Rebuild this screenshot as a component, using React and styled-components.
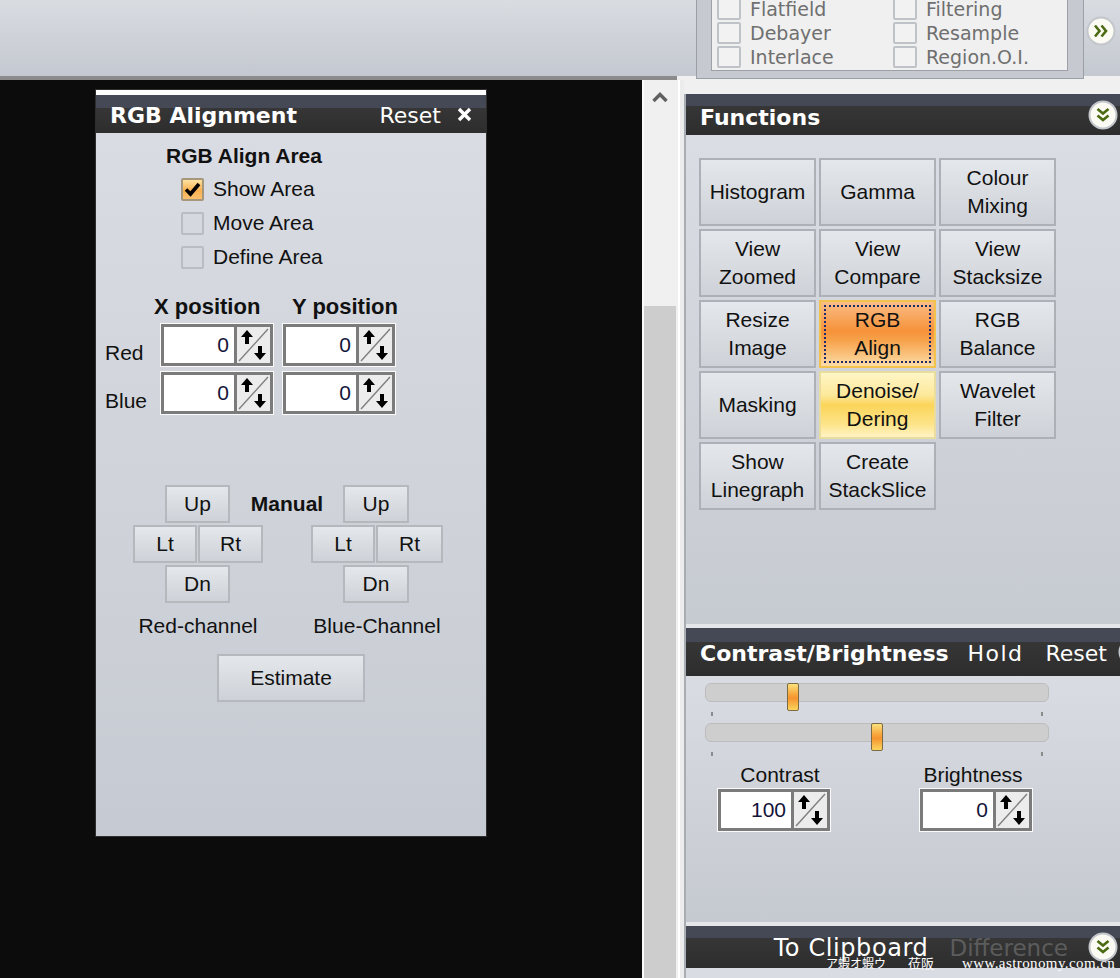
import styled, { createGlobalStyle } from "styled-components";

const GlobalStyle = createGlobalStyle`
  html, body {
    margin: 0;
    padding: 0;
    background: #0c0c0c;
  }
  body {
    font-family: "Liberation Sans", Arial, sans-serif;
  }
  #root {
    width: 1120px;
    height: 978px;
    overflow: hidden;
  }
`;

const options = [
  "Flatfield",
  "Filtering",
  "Debayer",
  "Resample",
  "Interlace",
  "Region.O.I.",
];

const functions = [
  { label: "Histogram" },
  { label: "Gamma" },
  { label: "Colour\nMixing" },
  { label: "View\nZoomed" },
  { label: "View\nCompare" },
  { label: "View\nStacksize" },
  { label: "Resize\nImage" },
  { label: "RGB\nAlign", state: "active" },
  { label: "RGB\nBalance" },
  { label: "Masking" },
  { label: "Denoise/\nDering", state: "hover" },
  { label: "Wavelet\nFilter" },
  { label: "Show\nLinegraph" },
  { label: "Create\nStackSlice" },
];

const SpinIcon = () => (
  <svg width="31" height="34" viewBox="0 0 31 34">
    <line x1="1" y1="33" x2="30" y2="1" stroke="#808080" strokeWidth="1.4" />
    <path d="M9 2 L3 9 H7 V16 H11 V9 H15 Z" fill="#000" />
    <path d="M22 32 L16 25 H20 V18 H24 V25 H28 Z" fill="#000" />
  </svg>
);

const Chevron = ({ dir = "down" }) => (
  <svg
    width="30"
    height="30"
    viewBox="0 0 30 30"
    style={{ transform: dir === "right" ? "rotate(-90deg)" : "none" }}
  >
    <circle cx="15" cy="15" r="13.5" fill="#fbfbf4" stroke="#c3c6cb" strokeWidth="2" />
    <path d="M9.5 9 L15 13.5 L20.5 9" stroke="#4b6a12" strokeWidth="2.6" fill="none" />
    <path d="M9.5 15.5 L15 20 L20.5 15.5" stroke="#4b6a12" strokeWidth="2.6" fill="none" />
  </svg>
);

const CloseIcon = () => (
  <svg width="15" height="15" viewBox="0 0 15 15">
    <path d="M2 2 L13 13 M13 2 L2 13" stroke="#fff" strokeWidth="3.4" />
  </svg>
);

const SpinBox = ({ value }) => (
  <SpinFrame>
    <SpinValue>{value}</SpinValue>
    <SpinButton>
      <SpinIcon />
    </SpinButton>
  </SpinFrame>
);

const CheckItem = ({ checked, children }) => (
  <CheckRow>
    <CheckBox $checked={checked}>
      {checked && (
        <svg width="19" height="19" viewBox="0 0 19 19">
          <path d="M3 9.5 L7.5 14 L16 4" stroke="#000" strokeWidth="3.6" fill="none" />
        </svg>
      )}
    </CheckBox>
    <CheckLabel>{children}</CheckLabel>
  </CheckRow>
);

const DPad = ({ cols }) => (
  <PadGrid $cols={cols}>
    <PadButton $area="up">Up</PadButton>
    <PadButton $area="lt">Lt</PadButton>
    <PadButton $area="rt">Rt</PadButton>
    <PadButton $area="dn">Dn</PadButton>
  </PadGrid>
);

const Slider = ({ thumb }) => (
  <SliderRow>
    <Track />
    <Thumb style={{ left: thumb }} />
    <Ticks>
      <Tick />
      <Tick />
    </Ticks>
  </SliderRow>
);

const App = () => (
  <Screen>
    <GlobalStyle />
    <TopBar>
      <ToolbarLeft />
      <ToolbarRight>
        <OptionsBox>
          <OptionsInner>
            {options.map((o) => (
              <OptionItem key={o}>
                <OptionCheck />
                <OptionLabel>{o}</OptionLabel>
              </OptionItem>
            ))}
          </OptionsInner>
        </OptionsBox>
        <TopChevron>
          <Chevron dir="right" />
        </TopChevron>
      </ToolbarRight>
    </TopBar>

    <Main>
      <Canvas>
        <AlignPanel>
          <PanelHeader $stripe={13}>
            <HeaderTitle>RGB Alignment</HeaderTitle>
            <HeaderAction>Reset</HeaderAction>
            <CloseIcon />
          </PanelHeader>
          <AlignBody>
            <AreaTitle>RGB Align Area</AreaTitle>
            <CheckList>
              <CheckItem checked>Show Area</CheckItem>
              <CheckItem>Move Area</CheckItem>
              <CheckItem>Define Area</CheckItem>
            </CheckList>

            <PosGrid>
              <span />
              <PosHeader $shift={-7}>X position</PosHeader>
              <PosHeader $shift={9}>Y position</PosHeader>
              <RowLabel>Red</RowLabel>
              <SpinBox value="0" />
              <SpinBox value="0" />
              <RowLabel>Blue</RowLabel>
              <SpinBox value="0" />
              <SpinBox value="0" />
            </PosGrid>

            <ManualArea>
              <DPad cols="32px 32px 33px 33px" />
              <ManualLabel>Manual</ManualLabel>
              <DPad cols="32px 32px 34px 34px" />
              <ChannelLabel>Red-channel</ChannelLabel>
              <span />
              <ChannelLabel>Blue-Channel</ChannelLabel>
            </ManualArea>

            <EstimateButton>Estimate</EstimateButton>
          </AlignBody>
        </AlignPanel>
      </Canvas>

      <ScrollBar>
        <ScrollArrow>
          <svg width="16" height="12" viewBox="0 0 16 12">
            <path d="M1.5 10 L8 3.5 L14.5 10" stroke="#5f5f5f" strokeWidth="3.4" fill="none" />
          </svg>
        </ScrollArrow>
        <ScrollThumb />
      </ScrollBar>
      <Splitter />

      <DockColumn>
        <DockStack>
          <PanelHeader $stripe={12} $height={41} $textDrop={3}>
            <HeaderTitle>Functions</HeaderTitle>
            <HeaderSpacer />
            <Chevron />
          </PanelHeader>
          <FunctionsBody>
            <FunctionGrid>
              {functions.map((f) => (
                <FunctionButton key={f.label} $state={f.state}>
                  {f.label}
                </FunctionButton>
              ))}
            </FunctionGrid>
          </FunctionsBody>

          <PanelHeader $stripe={14} $height={48} $textDrop={1}>
            <HeaderTitle>Contrast/Brightness</HeaderTitle>
            <HeaderAction $gap={22} $spacing={1.5}>Hold</HeaderAction>
            <HeaderAction $gap={11}>Reset</HeaderAction>
            <ClippedChevron>
              <Chevron />
            </ClippedChevron>
          </PanelHeader>
          <ContrastBody>
            <Slider thumb="82px" />
            <Slider thumb="166px" />
            <ValueRow>
              <ValueGroup $shift={6}>
                <ValueLabel>Contrast</ValueLabel>
                <SpinBox value="100" />
              </ValueGroup>
              <ValueGroup $shift={-3}>
                <ValueLabel>Brightness</ValueLabel>
                <SpinBox value="0" />
              </ValueGroup>
            </ValueRow>
          </ContrastBody>

          <PanelHeader $stripe={12} $height={42}>
            <HeaderSpacer />
            <FooterAction $spacing={0.6}>To Clipboard</FooterAction>
            <FooterAction $muted>Difference</FooterAction>
            <Chevron />
            <Watermark>
              <WatermarkSmall>ア蝦オ蝦ウ</WatermarkSmall>
              <WatermarkCjk>莅阪</WatermarkCjk>
              <WatermarkUrl>www.astronomy.com.cn</WatermarkUrl>
            </Watermark>
          </PanelHeader>
          <DockFooter />
        </DockStack>
      </DockColumn>
    </Main>
  </Screen>
);

const Screen = styled.div`
  width: 1120px;
  height: 978px;
  display: flex;
  flex-direction: column;
  overflow: hidden;
`;

const TopBar = styled.div`
  display: flex;
  height: 80px;
  flex-shrink: 0;
`;

const toolbarGradient = "linear-gradient(to bottom, #d9dce1, #c4c8d0)";

const ToolbarLeft = styled.div`
  width: 677px;
  height: 76px;
  background: ${toolbarGradient};
  border-bottom: 4px solid #8b8b8b;
`;

const ToolbarRight = styled.div`
  flex: 1;
  display: flex;
  align-items: flex-start;
  padding-left: 19px;
  background: ${toolbarGradient} top / 100% 76px no-repeat, #f0f0f0;
  position: relative;
  z-index: 1;
`;

const OptionsBox = styled.div`
  margin-top: -8px;
  width: 357px;
  height: 83px;
  border: 1px solid #9c9fa5;
  background: #c6cad0;
  padding: 0 15px 2px 14px;
`;

const OptionsInner = styled.div`
  height: 73px;
  background: #f0f0f0;
  border: 1px solid #9da1a7;
  border-top: none;
  padding: 4px 0 0 5px;
  display: grid;
  grid-template-columns: 176px 1fr;
  grid-auto-rows: 24px;
`;

const OptionItem = styled.div`
  display: flex;
  align-items: center;
`;

const OptionCheck = styled.div`
  width: 20px;
  height: 18px;
  border: 2px solid #bfc2c7;
  border-radius: 2px;
  background: #f2f2f2;
`;

const OptionLabel = styled.span`
  margin-left: 9px;
  font-family: "DejaVu Sans", Verdana, sans-serif;
  font-size: 19px;
  color: #6f6f6f;
`;

const TopChevron = styled.div`
  margin: 16px 0 0 2px;
  display: flex;
`;

const Main = styled.div`
  flex: 1;
  display: flex;
  min-height: 0;
`;

const Canvas = styled.div`
  width: 547px;
  background: #0c0c0c;
  padding: 9px 0 0 95px;
`;

const AlignPanel = styled.div`
  width: 390px;
  height: 741px;
  border: 1px solid #2e2e2e;
  display: flex;
  flex-direction: column;
  background: #fff;
  padding-top: 5px;
`;

const PanelHeader = styled.div`
  position: relative;
  height: ${(p) => p.$height || 38}px;
  flex-shrink: 0;
  display: flex;
  align-items: center;
  padding: 0 2px 0 12px;
  background: linear-gradient(
    to bottom,
    #454955 0,
    #454955 ${(p) => p.$stripe}px,
    #363636 ${(p) => p.$stripe}px,
    #2d2d2d 100%
  );
  color: #fff;
  white-space: nowrap;
  & > span {
    position: relative;
    top: ${(p) => p.$textDrop || 1}px;
  }
  ${AlignPanel} & {
    padding-right: 14px;
  }
`;

const HeaderTitle = styled.span`
  font-family: "DejaVu Sans", Verdana, sans-serif;
  font-weight: bold;
  font-size: 22px;
  flex: 1;
  padding-left: 2px;
`;

const HeaderSpacer = styled.span`
  flex: 1;
`;

const HeaderAction = styled.span`
  font-family: "DejaVu Sans", Verdana, sans-serif;
  font-size: 22px;
  letter-spacing: ${(p) => p.$spacing || 0}px;
  margin-right: ${(p) => (p.$gap ? p.$gap : 16)}px;
  ${AlignPanel} & {
    margin-right: 16px;
  }
`;

const ClippedChevron = styled.div`
  display: flex;
  margin-right: -30px;
`;

const AlignBody = styled.div`
  flex: 1;
  display: flex;
  flex-direction: column;
  padding-top: 11px;
  background: linear-gradient(to bottom, #d9dce2, #c6cad2);
  color: #111;
`;

const AreaTitle = styled.div`
  margin-left: 70px;
  font-weight: bold;
  font-size: 21px;
  line-height: 24px;
`;

const CheckList = styled.div`
  margin: 4px 0 0 85px;
  display: flex;
  flex-direction: column;
`;

const CheckRow = styled.div`
  height: 34px;
  display: flex;
  align-items: center;
`;

const CheckBox = styled.div`
  width: 19px;
  height: 19px;
  border: 2px solid ${(p) => (p.$checked ? "#a6977a" : "#b9bcc2")};
  border-radius: 2px;
  background: ${(p) =>
    p.$checked
      ? "linear-gradient(to bottom, #fde2a0, #f8b050 55%, #fac06e)"
      : "#d5d8de"};
  display: flex;
  align-items: center;
  justify-content: center;
`;

const CheckLabel = styled.span`
  margin-left: 9px;
  font-size: 21px;
`;

const PosGrid = styled.div`
  margin: 20px 0 0 9px;
  display: grid;
  grid-template-columns: 46px 112px 112px;
  grid-template-rows: 24px 42px 42px;
  column-gap: 10px;
  row-gap: 6px;
  align-items: center;
`;

const PosHeader = styled.div`
  margin-left: ${(p) => p.$shift}px;
  margin-bottom: -2px;
  font-weight: bold;
  font-size: 22px;
  line-height: 24px;
  white-space: nowrap;
`;

const RowLabel = styled.div`
  align-self: end;
  margin-bottom: 1px;
  font-size: 21px;
  line-height: 24px;
`;

const SpinFrame = styled.div`
  display: flex;
  width: 106px;
  height: 36px;
  border: 3px solid #7b7b7b;
  box-shadow: 0 0 0 1px #fbfbfb;
  background: #fff;
`;

const SpinValue = styled.div`
  flex: 1;
  text-align: right;
  padding-right: 5px;
  font-size: 21px;
  line-height: 36px;
  color: #14143a;
`;

const SpinButton = styled.div`
  width: 33px;
  border-left: 3px solid #7b7b7b;
  background: #ececec;
  display: flex;
  align-items: center;
  justify-content: center;
`;

const ManualArea = styled.div`
  margin: 71px 0 0 37px;
  display: grid;
  grid-template-columns: 130px 48px 132px;
  grid-template-rows: 118px 24px;
  row-gap: 11px;
`;

const PadGrid = styled.div`
  display: grid;
  grid-template-columns: ${(p) => p.$cols};
  grid-template-rows: repeat(3, 38px);
  row-gap: 2px;
  grid-template-areas:
    ". up up ."
    "lt lt rt rt"
    ". dn dn .";
`;

const buttonFace = `
  border: 2px solid #b5b8bd;
  background: linear-gradient(to bottom, #e4e7eb, #ced2d8);
  color: #111;
  font-family: "Liberation Sans", Arial, sans-serif;
  font-size: 21px;
  display: flex;
  align-items: center;
  justify-content: center;
`;

const PadButton = styled.div`
  ${buttonFace}
  grid-area: ${(p) => p.$area};
  margin-left: ${(p) => (p.$area === "rt" ? 1 : 0)}px;
`;

const ManualLabel = styled.div`
  justify-self: center;
  line-height: 38px;
  font-weight: bold;
  font-size: 21px;
  white-space: nowrap;
`;

const ChannelLabel = styled.div`
  text-align: center;
  font-size: 21px;
  line-height: 24px;
  white-space: nowrap;
`;

const EstimateButton = styled.div`
  ${buttonFace}
  align-self: center;
  margin-top: 16px;
  width: 144px;
  height: 44px;
`;

const ScrollBar = styled.div`
  width: 32px;
  background: #f0f0f0;
  border-left: 2px solid #fafafa;
  padding-right: 2px;
  display: flex;
  flex-direction: column;
`;

const ScrollArrow = styled.div`
  height: 38px;
  display: flex;
  justify-content: center;
  padding: 11px 0 0 0;
`;

const ScrollThumb = styled.div`
  margin-top: 177px;
  flex: 1;
  background: #cdcdcd;
`;

const Splitter = styled.div`
  width: 4px;
  border-left: 2px solid #ffffff;
  background: #ececec;
`;

const DockColumn = styled.div`
  flex: 1;
  display: flex;
  flex-direction: column;
  background: #f0f0f0;
  padding-top: 14px;
`;

const DockStack = styled.div`
  flex: 1;
  display: flex;
  flex-direction: column;
  border-left: 2px solid #a8acb3;
`;

const FunctionsBody = styled.div`
  flex-shrink: 0;
  box-sizing: border-box;
  height: 493px;
  border-bottom: 4px solid #e4e6ea;
  background: linear-gradient(to bottom, #dadde3, #c6cad1);
  padding: 23px 0 0 13px;
`;

const FunctionGrid = styled.div`
  display: grid;
  grid-template-columns: repeat(3, 117px);
  grid-auto-rows: 68px;
  column-gap: 3px;
  row-gap: 3px;
`;

const stateFaces = {
  active: `
    border-color: #f3c24c;
    background: linear-gradient(to bottom, #f9bd86 0%, #f6923a 45%, #f7a24a 60%, #fcdca6 100%);
    outline: 2px dotted #1d2b6e;
    outline-offset: -7px;
  `,
  hover: `
    border-color: #e9dc9f;
    background: linear-gradient(to bottom, #fff6c6 0%, #fde89a 35%, #fbd55a 50%, #fde48a 80%, #fff3c4 100%);
  `,
};

const FunctionButton = styled.div`
  ${buttonFace}
  text-align: center;
  white-space: pre-line;
  line-height: 28px;
  border-color: #adb0b6;
  ${(p) => stateFaces[p.$state] || ""}
`;

const ContrastBody = styled.div`
  height: 250px;
  flex-shrink: 0;
  box-sizing: border-box;
  border-bottom: 4px solid #e4e6ea;
  background: linear-gradient(to bottom, #d9dce2, #c5c9d0);
  padding: 4px 0 0 19px;
`;

const SliderRow = styled.div`
  position: relative;
  width: 344px;
  height: 36px;
  margin-bottom: 4px;
`;

const Track = styled.div`
  margin-top: 3px;
  height: 17px;
  border: 1px solid #bcbcbc;
  border-radius: 6px;
  background: #cecece;
`;

const Thumb = styled.div`
  position: absolute;
  top: 0;
  width: 10px;
  height: 26px;
  border: 1px solid #7c6a44;
  border-radius: 2px;
  background: linear-gradient(to bottom, #fbe27c, #f7a63c 40%, #f59430 55%, #fbd55c);
`;

const Ticks = styled.div`
  display: flex;
  justify-content: space-between;
  padding: 0 6px;
  margin-top: 10px;
`;

const Tick = styled.div`
  width: 2px;
  height: 4px;
  background: #8a8a8a;
`;

const ValueRow = styled.div`
  display: flex;
  gap: 90px;
  margin: 4px 0 0 13px;
`;

const ValueGroup = styled.div`
  display: flex;
  flex-direction: column;
  align-items: center;
  & > span {
    margin-left: ${(p) => p.$shift * 2}px;
  }
`;

const ValueLabel = styled.span`
  font-size: 21px;
  line-height: 24px;
  color: #111;
  margin-bottom: 2px;
`;

const FooterAction = styled.span`
  font-family: "DejaVu Sans", Verdana, sans-serif;
  font-size: ${(p) => (p.$muted ? 23 : 24)}px;
  letter-spacing: ${(p) => p.$spacing || 0}px;
  color: ${(p) => (p.$muted ? "#5c5c5c" : "#fff")};
  margin-right: ${(p) => (p.$muted ? 20 : 21)}px;
`;

const Watermark = styled.div`
  position: absolute;
  left: 140px;
  bottom: -2px;
  display: flex;
  align-items: flex-end;
  color: #fff;
  pointer-events: none;
`;

const WatermarkSmall = styled.span`
  font-family: "Noto Sans CJK JP", sans-serif;
  font-size: 12px;
  width: 82px;
  line-height: 14px;
`;

const WatermarkCjk = styled.span`
  font-family: "Noto Sans CJK SC", sans-serif;
  font-size: 13px;
  width: 54px;
  line-height: 14px;
`;

const WatermarkUrl = styled.span`
  font-family: "Liberation Serif", "Times New Roman", serif;
  font-size: 15px;
  line-height: 14px;
  letter-spacing: 0.4px;
`;

const DockFooter = styled.div`
  flex: 1;
  background: #d9dce2;
`;

export default App;
